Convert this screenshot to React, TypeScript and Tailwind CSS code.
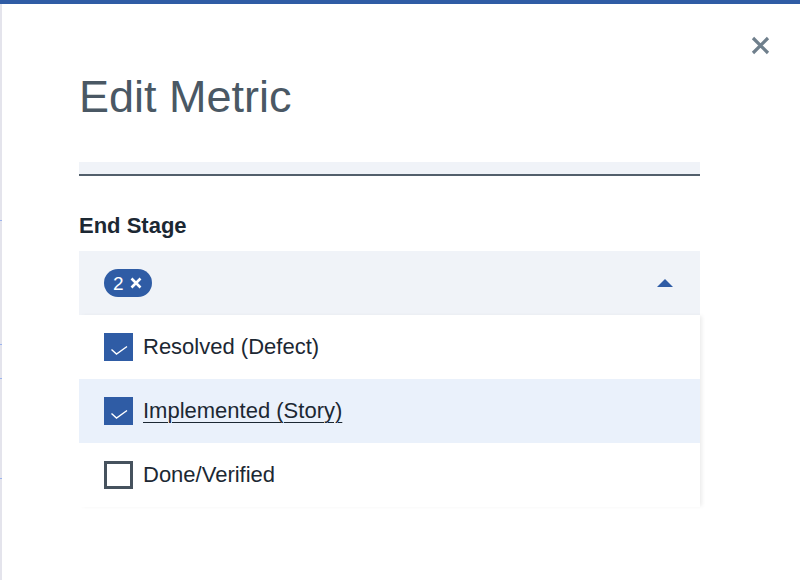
import React from "react";

function Check() {
  return (
    <svg width="28" height="28" viewBox="0 0 28 28" className="block">
      <polyline points="7.5,16.5 12.5,21 23,13.5" fill="none" stroke="#ffffff" strokeWidth="1.4" />
    </svg>
  );
}

function Row({ label, checked, active }: { label: string; checked: boolean; active?: boolean }) {
  return (
    <div className={`flex h-[64px] items-center pl-[25px] ${active ? "bg-[#eaf1fb]" : "bg-white"}`}>
      {checked ? (
        <div className="h-[28px] w-[29px] bg-[#2f5ca5]">
          <Check />
        </div>
      ) : (
        <div className="h-[28px] w-[29px] border-[3px] border-[#46525e] bg-white" />
      )}
      <span
        className={`ml-[10px] text-[22px] leading-[28px] text-[#1c2833] ${active ? "underline decoration-1 underline-offset-[4px]" : ""}`}
      >
        {label}
      </span>
    </div>
  );
}

export default function App() {
  return (
    <div
      className="relative flex h-[580px] w-[800px] overflow-hidden bg-white"
      style={{ fontFamily: '"Liberation Sans", Arial, sans-serif' }}
    >
      <div className="relative w-[2px] shrink-0 bg-[#e4e4ec]">
        <div className="absolute left-0 top-[220px] h-[1px] w-[2px] bg-[#9db4ee]" />
        <div className="absolute left-0 top-[344px] h-[1px] w-[2px] bg-[#9db4ee]" />
        <div className="absolute left-0 top-[378px] h-[1px] w-[2px] bg-[#9db4ee]" />
        <div className="absolute left-0 top-[478px] h-[1px] w-[2px] bg-[#9db4ee]" />
      </div>
      <div className="absolute left-0 top-0 h-[4px] w-[800px] bg-[#2f5ca5]" />
      <div className="relative flex flex-1 flex-col pt-[4px]">
        <button className="absolute left-[747px] top-[34px] flex h-[23px] w-[23px] items-center justify-center">
          <svg width="19" height="19" viewBox="0 0 19 19">
            <path d="M2 2 L17 17 M17 2 L2 17" stroke="#6f7f8c" strokeWidth="3.2" strokeLinecap="butt" />
          </svg>
        </button>
        <div className="ml-[77px] w-[621px]">
          <h1 className="mt-[70px] text-[45px] leading-[45px] font-normal text-[#4a5864]">Edit Metric</h1>
          <div className="mt-[43px] h-[14px] border-b-2 border-[#525f6b] bg-[#f0f3f8]" />
          <div className="mt-[36px] text-[22px] leading-[28px] font-bold text-[#1c2833]">End Stage</div>
          <div className="mt-[11px] flex h-[64px] items-center justify-between bg-[#f0f3f8] pl-[25px] pr-[27px]">
            <div className="flex h-[28px] w-[48px] items-center rounded-full bg-[#2f5ca5] pl-[9px]">
              <span className="text-[19px] leading-none text-white">2</span>
              <svg width="12" height="12" viewBox="0 0 12 12" className="ml-[6px]">
                <path d="M1.5 1.5 L10.5 10.5 M10.5 1.5 L1.5 10.5" stroke="#ffffff" strokeWidth="2.6" />
              </svg>
            </div>
            <svg width="16" height="8" viewBox="0 0 16 8">
              <polygon points="8,0 16,8 0,8" fill="#2f5ca5" />
            </svg>
          </div>
          <div className="shadow-[3px_0_4px_-1px_rgba(0,0,0,0.08)]">
            <Row label="Resolved (Defect)" checked />
            <Row label="Implemented (Story)" checked active />
            <Row label="Done/Verified" checked={false} />
          </div>
        </div>
      </div>
    </div>
  );
}
